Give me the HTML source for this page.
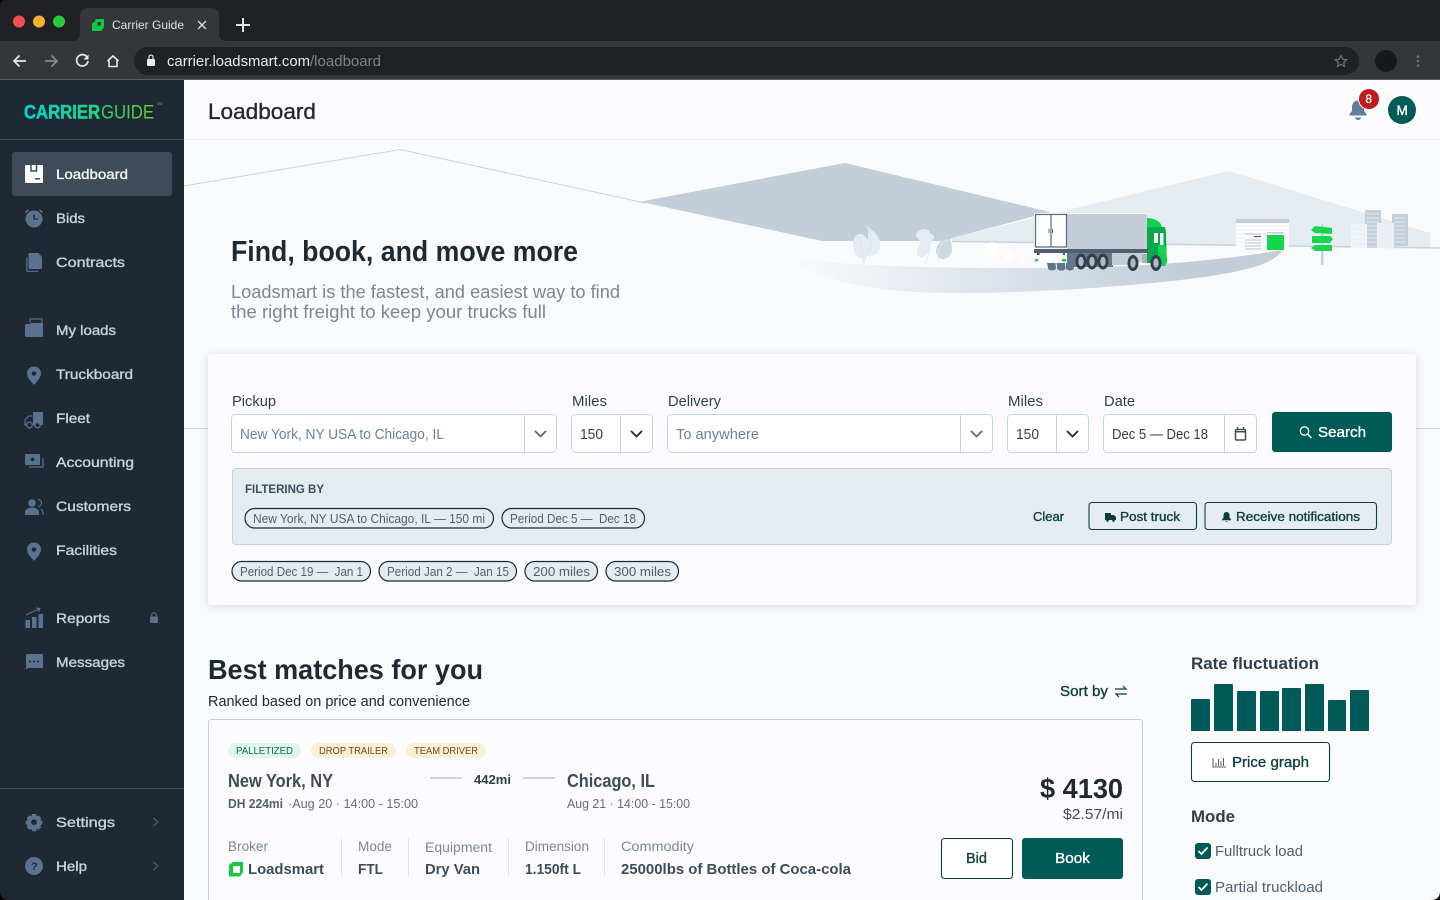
<!DOCTYPE html>
<html lang="en"><head><meta charset="utf-8"><title>Carrier Guide</title>
<style>
html,body{margin:0;padding:0;background:#f9fafc;overflow:hidden}
svg{display:block}
text{font-family:"Liberation Sans",sans-serif;white-space:pre}
.m{stroke-width:.35}
.b{font-weight:700}
</style></head><body>
<svg xmlns="http://www.w3.org/2000/svg" width="1440" height="900" viewBox="0 0 1440 900">
<defs>
<linearGradient id="lg" gradientUnits="userSpaceOnUse" x1="24" y1="0" x2="156" y2="0"><stop offset="0" stop-color="#08cfd6"/><stop offset=".55" stop-color="#1ed483"/><stop offset="1" stop-color="#6ccb24"/></linearGradient>
<linearGradient id="rd" gradientUnits="userSpaceOnUse" x1="790" y1="0" x2="1180" y2="0"><stop offset="0" stop-color="#f9fafc"/><stop offset="1" stop-color="#c3ced9"/></linearGradient>
<filter id="sh" x="-5%" y="-10%" width="110%" height="125%"><feDropShadow dx="0" dy="1" stdDeviation="4" flood-color="#52606d" flood-opacity=".22"/></filter>
</defs>

<!-- browser chrome -->
<rect width="1440" height="41" fill="#202124"/>
<rect y="41" width="1440" height="39" fill="#35363a"/>
<rect y="79" width="1440" height="1" fill="#5a5c60"/>
<path d="M72 41q8 0 8-8V16q0-8 8-8h123q8 0 8 8v17q0 8 8 8z" fill="#35363a"/>
<circle cx="19" cy="21.500" r="6" fill="#f0504f"/><circle cx="39" cy="21.500" r="6" fill="#f5b02e"/><circle cx="59" cy="21.500" r="6" fill="#2cc840"/>
<path d="M92 23.500l3.500-2.500v-2h8.500v8l-2.500 4H92z" fill="#12c93f"/><rect x="97.500" y="22" width="3.500" height="3.500" fill="#35363a"/>
<text x="112" y="29" font-size="12" fill="#dfe1e5" textLength="72" lengthAdjust="spacingAndGlyphs">Carrier Guide</text>
<path d="M198 21l8 8M206 21l-8 8" stroke="#dfe1e5" stroke-width="1.300"/>
<path d="M243 18v14M236 25h14" stroke="#dfe1e5" stroke-width="2"/>
<path d="M26 61H14M19.500 55.500L14 61l5.500 5.500" fill="none" stroke="#e8eaed" stroke-width="1.700"/>
<path d="M45 61h12M51.500 55.500L57 61l-5.500 5.500" fill="none" stroke="#85888c" stroke-width="1.700"/>
<path d="M87.300 57.500A5.700 5.700 0 1 0 88 61" fill="none" stroke="#e8eaed" stroke-width="1.700"/><path d="M88.500 54.500v5h-5z" fill="#e8eaed"/>
<path d="M107.500 61l5.500-5 5.500 5M109 60v6.500h8V60" fill="none" stroke="#e8eaed" stroke-width="1.600"/>
<rect x="134" y="47" width="1225" height="28" rx="14" fill="#202124"/>
<rect x="147" y="59" width="8" height="7" rx="1" fill="#e8eaed"/><path d="M149 59v-2a2 2 0 0 1 4 0v2" fill="none" stroke="#e8eaed" stroke-width="1.200"/>
<text x="167" y="66" font-size="14.500" fill="#e8eaed" textLength="143" lengthAdjust="spacingAndGlyphs">carrier.loadsmart.com</text>
<text x="310" y="66" font-size="14.500" fill="#7f8387" textLength="71" lengthAdjust="spacingAndGlyphs">/loadboard</text>
<path d="M1341 55.500l1.700 3.700 4 .5-3 2.700.8 4-3.500-2-3.500 2 .8-4-3-2.700 4-.5z" fill="none" stroke="#6f7276" stroke-width="1.200"/>
<circle cx="1386" cy="61" r="11" fill="#17181a"/>
<circle cx="1418" cy="56.500" r="1.300" fill="#6f7276"/><circle cx="1418" cy="61" r="1.300" fill="#6f7276"/><circle cx="1418" cy="65.500" r="1.300" fill="#6f7276"/>

<!-- main -->
<rect x="184" y="80" width="1256" height="820" fill="#f9fafc"/>
<rect x="184" y="80" width="1256" height="59" fill="#fcfcfe"/>
<rect x="184" y="139" width="1256" height="1" fill="#e8edf2"/>
<text x="208" y="119" font-size="22" fill="#1f2933" stroke="#1f2933" class="m" textLength="108" lengthAdjust="spacingAndGlyphs">Loadboard</text>
<path d="M1358 100.500c-4 0-6 3-6 6.500v4l-2.500 3v1.500h17V114l-2.500-3v-4c0-3.500-2-6.500-6-6.500z" fill="#627d98"/><path d="M1355 117.500a3 2.500 0 0 0 6 0z" fill="#627d98"/>
<circle cx="1369" cy="99" r="11" fill="#fcfcfe"/><circle cx="1369" cy="99" r="10" fill="#be1a1f"/>
<text x="1365.500" y="103" font-size="11.500" fill="#fff" stroke="#fff" class="m">8</text>
<circle cx="1402" cy="110" r="14" fill="#005a55"/>
<text x="1396.500" y="115" font-size="13.500" fill="#fff" stroke="#fff" class="m">M</text>

<!-- hero -->
<path d="M184 186L400 149.500 645 203" fill="none" stroke="#c8d4e0" stroke-width="1"/>
<path d="M952 238L1229 171 1430 233V247.500L952 241.500z" fill="#e4ebf1"/>
<path d="M640 201.700L845 163 1050 212 952 238 948 241H822z" fill="#c3ced9"/>
<path d="M952 241.500L1440 248" fill="none" stroke="#c8d3de" stroke-width="1.500"/>
<path d="M783 257C860 268 960 268 1040 268 1130 268 1210 262 1283 250 1270 268 1230 276 1130 285 1060 291 1000 293 960 293 880 293 830 285 783 257z" fill="url(#rd)"/>
<!-- trees -->
<path d="M868 226c5 6 13 8 12 22-2 6-7 8-12 8z" fill="#e4ebf1"/>
<path d="M860 234c-5 0-7 6-7 11 0 7 3 13 8 13 5 0 8-5 8-12 0-6-4-12-9-12z" fill="#e4ebf1"/>
<path d="M855 235c6 3 8 14 8 28M865 225c5 3 9 16 3 27-1 3-3 6-4 11" fill="none" stroke="#d9e1e8" stroke-width=".8"/>
<path d="M925 229c-4 0-9 2-9 6 0 3 3 4 4 6 1 3-3 6-3 11 0 4 3 6 6 5 5-2 7-8 8-13 1-3 3-5 3-8-1-2-4-1-4-3s-2-4-5-4z" fill="#e4ebf1"/>
<path d="M946 238c-4 1-10 8-10 13 0 5 3 8 7 8 5 0 9-5 9-10 0-5-2-12-6-11z" fill="#cdd7e0"/>
<path d="M926 238c5 6 4 16 -1 26M946 240c-6 4-9 10-8 23" fill="none" stroke="#e6ebf0" stroke-width=".8"/>
<circle cx="992" cy="249" r="7" fill="#fff" opacity=".85"/><circle cx="1010" cy="257" r="5" fill="#fff" opacity=".8"/><circle cx="1022" cy="261" r="2.500" fill="#fff" opacity=".8"/>
<!-- truck -->
<path d="M1047 263h8.500l.5 5a4 2.500 0 0 1-8 0zM1056.500 263h8.500l.5 5a4 2.500 0 0 1-8.500 0zM1066 263h8v5a4 2.500 0 0 1-8 0z" fill="#5e7488"/>
<rect x="1067" y="253" width="46" height="14" fill="#66798c"/>
<rect x="1112" y="253" width="16" height="12" fill="#c3ced9"/>
<rect x="1127" y="253" width="16" height="9" fill="#c3ced9"/>
<rect x="1142" y="254" width="9" height="9" fill="#a8b5c1"/>
<path d="M1147 218q9 .5 13 5l2 4h3l1 5 .5 21 .5 9-2 4h-6l-1-3h-11z" fill="#0aa84a"/>
<path d="M1147 218q9 .5 13 5l2 4-15 .5z" fill="#14d051"/>
<path d="M1158 245h7l1.500 8 .5 9-2 4h-7z" fill="#14d051"/>
<rect x="1154" y="233" width="4" height="10" fill="#eef2f5"/><rect x="1160" y="233" width="3.500" height="12" fill="#eef2f5"/>
<rect x="1034" y="213" width="113" height="37" fill="#fcfcfe"/>
<rect x="1067" y="214" width="80" height="36" rx="1" fill="#c3ced9"/>
<rect x="1035.500" y="214.500" width="31" height="32.500" fill="#fff" stroke="#52697f" stroke-width="1.200"/>
<path d="M1051 214.500v32.500" stroke="#52697f" stroke-width="1.200"/>
<path d="M1049 229v4M1052.500 229v4" stroke="#52697f" stroke-width="1"/>
<rect x="1034" y="249" width="114" height="4" fill="#52606d"/>
<rect x="1037" y="253" width="2.500" height="3" fill="#323f4b"/><rect x="1063" y="253" width="2" height="5" fill="#52606d"/>
<rect x="1034" y="255" width="33" height="7" fill="#fff"/>
<rect x="1035" y="259" width="3" height="2.500" fill="#14d051"/><rect x="1062" y="259" width="4" height="2.500" fill="#14d051"/>
<g fill="#323f4b">
<ellipse cx="1081" cy="261.500" rx="5.500" ry="8"/><ellipse cx="1092" cy="261.500" rx="5.500" ry="8"/><ellipse cx="1103" cy="261.500" rx="5.500" ry="8"/><ellipse cx="1133" cy="263" rx="5.500" ry="8"/><ellipse cx="1156" cy="263" rx="5.500" ry="8"/>
</g>
<g fill="#aeb9c4">
<ellipse cx="1081" cy="261.500" rx="2.700" ry="4.800"/><ellipse cx="1092" cy="261.500" rx="2.700" ry="4.800"/><ellipse cx="1103" cy="261.500" rx="2.700" ry="4.800"/><ellipse cx="1133" cy="263" rx="2.700" ry="4.800"/><ellipse cx="1156" cy="263" rx="2.700" ry="4.800"/>
</g>
<!-- warehouse -->
<rect x="1236" y="219" width="53" height="31" fill="#fcfcfe"/>
<path d="M1236 226h53M1236 230h53M1236 234h53M1236 238h9M1236 242h9M1236 246h9" stroke="#edf1f5"/>
<rect x="1236" y="219" width="53" height="4" fill="#c3ced9"/>
<rect x="1267" y="235" width="17" height="15" fill="#16d64e"/>
<rect x="1267" y="232" width="17" height="1.500" fill="#c3ced9"/>
<path d="M1245 234h16M1245 240h16M1245 243h16M1245 246h16M1245 249h16" stroke="#c3ced9" stroke-width="1.300"/><path d="M1254 236.500h7" stroke="#52697f" stroke-width="1.300"/>
<!-- sign -->
<rect x="1321" y="224" width="2.500" height="41" fill="#c8d3de"/>
<path d="M1315 226l17 2v6l-17-1-4-3z" fill="#16d64e"/>
<path d="M1312 236h18l3 3-3 4h-18z" fill="#16d64e"/>
<path d="M1315 245h17v6h-17l-4-3z" fill="#16d64e"/>
<!-- city -->
<rect x="1365" y="210" width="16" height="36" fill="#c3ced9"/><rect x="1392" y="214" width="16" height="32" fill="#c3ced9"/>
<path d="M1367 214h12M1367 218h12M1367 222h12M1367 226h12M1367 230h12M1367 234h12M1367 238h12M1367 242h12M1394 218h12M1394 222h12M1394 226h12M1394 230h12M1394 234h12M1394 238h12M1394 242h12" stroke="#d8e0e7" stroke-width="1.400"/>
<rect x="1351" y="224" width="16" height="24" fill="#f1f4f7"/><rect x="1377" y="223" width="17" height="25" fill="#ebeff3"/>
<path d="M1353 229h12M1353 234h12M1353 239h12M1353 244h12M1379 229h13M1379 234h13M1379 239h13M1379 244h13" stroke="#e4ebf1"/>
<text x="231" y="261" font-size="28.500" fill="#1f2933" class="b" textLength="347" lengthAdjust="spacingAndGlyphs">Find, book, and move more</text>
<text x="231" y="298" font-size="18" fill="#7b8794" textLength="389" lengthAdjust="spacingAndGlyphs">Loadsmart is the fastest, and easiest way to find</text>
<text x="231" y="318" font-size="18" fill="#7b8794" textLength="315" lengthAdjust="spacingAndGlyphs">the right freight to keep your trucks full</text>
<rect x="184" y="428" width="24" height="1" fill="#c8d6e3"/><rect x="1416" y="428" width="24" height="1" fill="#c8d6e3"/>

<!-- search card -->
<rect x="208" y="354" width="1208" height="251" rx="3" fill="#fcfcff" filter="url(#sh)"/>
<g font-size="15" fill="#323f4b">
<text x="232" y="406" textLength="44" lengthAdjust="spacingAndGlyphs">Pickup</text>
<text x="572" y="406" textLength="35" lengthAdjust="spacingAndGlyphs">Miles</text>
<text x="668" y="406" textLength="53" lengthAdjust="spacingAndGlyphs">Delivery</text>
<text x="1008" y="406" textLength="35" lengthAdjust="spacingAndGlyphs">Miles</text>
<text x="1104" y="406" textLength="31" lengthAdjust="spacingAndGlyphs">Date</text>
</g>
<g fill="#fff" stroke="#c3d3e0">
<rect x="231.500" y="414.500" width="325" height="38" rx="4"/>
<rect x="571.500" y="414.500" width="81" height="38" rx="4"/>
<rect x="667.500" y="414.500" width="325" height="38" rx="4"/>
<rect x="1007.500" y="414.500" width="81" height="38" rx="4"/>
<rect x="1103.500" y="414.500" width="153" height="38" rx="4"/>
</g>
<path d="M524.500 415v37M620.500 415v37M960.500 415v37M1056.500 415v37M1224.500 415v37" stroke="#c3d3e0"/>
<path d="M535 431l5.500 5.500 5.500-5.500M971 431l5.500 5.500 5.500-5.500" fill="none" stroke="#52606d" stroke-width="1.600"/>
<path d="M631 431l5.500 5.500 5.500-5.500M1067 431l5.500 5.500 5.500-5.500" fill="none" stroke="#1f2933" stroke-width="1.800"/>
<g font-size="14.500">
<text x="240" y="439" fill="#6b8299" textLength="204" lengthAdjust="spacingAndGlyphs">New York, NY USA to Chicago, IL</text>
<text x="580" y="439" fill="#323f4b" textLength="23" lengthAdjust="spacingAndGlyphs">150</text>
<text x="676" y="439" fill="#6b8299" textLength="83" lengthAdjust="spacingAndGlyphs">To anywhere</text>
<text x="1016" y="439" fill="#323f4b" textLength="23" lengthAdjust="spacingAndGlyphs">150</text>
<text x="1112" y="439" fill="#323f4b" textLength="96" lengthAdjust="spacingAndGlyphs">Dec 5 — Dec 18</text>
</g>
<rect x="1235.500" y="429.500" width="10" height="10.500" rx="1" fill="none" stroke="#3e4c59" stroke-width="1.500"/><path d="M1235.500 431h10v1.500h-10z" fill="#3e4c59"/><path d="M1237.500 427v3M1243.500 427v3" stroke="#3e4c59" stroke-width="1.400"/>
<rect x="1272" y="412" width="120" height="40" rx="3" fill="#005a57"/>
<circle cx="1304.500" cy="431" r="4.200" fill="none" stroke="#fff" stroke-width="1.300"/><path d="M1307.500 434l4 4" stroke="#fff" stroke-width="1.300"/>
<text x="1318" y="437" font-size="14.500" fill="#fff" stroke="#fff" class="m" textLength="48" lengthAdjust="spacingAndGlyphs">Search</text>

<!-- filter box -->
<rect x="232.500" y="468.500" width="1159" height="76" rx="3" fill="#e4ebf1" stroke="#c3d3e0"/>
<text x="245" y="493" font-size="12" fill="#3e4c59" class="b" textLength="79" lengthAdjust="spacingAndGlyphs">FILTERING BY</text>
<g fill="none" stroke="#1f2933" stroke-width="1.200">
<rect x="245" y="508.500" width="248.500" height="19.500" rx="9.700"/>
<rect x="502" y="508.500" width="142.500" height="19.500" rx="9.700"/>
<rect x="232" y="561.500" width="138.500" height="19.500" rx="9.700" fill="#e4ebf1"/>
<rect x="379" y="561.500" width="137.500" height="19.500" rx="9.700" fill="#e4ebf1"/>
<rect x="525" y="561.500" width="72.500" height="19.500" rx="9.700" fill="#e4ebf1"/>
<rect x="606" y="561.500" width="72.500" height="19.500" rx="9.700" fill="#e4ebf1"/>
</g>
<g font-size="12.500" fill="#52606d">
<text x="253" y="523" textLength="232" lengthAdjust="spacingAndGlyphs">New York, NY USA to Chicago, IL — 150 mi</text>
<text x="510" y="523" textLength="126" lengthAdjust="spacingAndGlyphs">Period Dec 5 —  Dec 18</text>
<text x="240" y="576" textLength="123" lengthAdjust="spacingAndGlyphs">Period Dec 19 —  Jan 1</text>
<text x="387" y="576" textLength="122" lengthAdjust="spacingAndGlyphs">Period Jan 2 —  Jan 15</text>
<text x="533" y="576" textLength="57" lengthAdjust="spacingAndGlyphs">200 miles</text>
<text x="614" y="576" textLength="57" lengthAdjust="spacingAndGlyphs">300 miles</text>
</g>
<g font-size="12.500" fill="#0f3d3e" stroke="#0f3d3e" class="m">
<text x="1033" y="521" textLength="31" lengthAdjust="spacingAndGlyphs">Clear</text>
<text x="1120" y="521" textLength="60" lengthAdjust="spacingAndGlyphs">Post truck</text>
<text x="1236" y="521" textLength="124" lengthAdjust="spacingAndGlyphs">Receive notifications</text>
</g>
<rect x="1089" y="502.500" width="107.500" height="27" rx="3" fill="none" stroke="#0f3d3e" stroke-width="1.100"/>
<rect x="1205" y="502.500" width="171.500" height="27" rx="3" fill="none" stroke="#0f3d3e" stroke-width="1.100"/>
<path d="M1105 513h6v7h-6zM1111 515h3l2 2v3h-5z" fill="#0f3d3e"/><circle cx="1107.500" cy="520.500" r="1.300" fill="#0f3d3e"/><circle cx="1113.500" cy="520.500" r="1.300" fill="#0f3d3e"/>
<path d="M1226.500 512c-2 0-3 1.500-3 3.500v2l-1.500 2v.7h9v-.7l-1.500-2v-2c0-2-1-3.500-3-3.500zM1225.500 521h2l-1 1.300z" fill="#0f3d3e"/>

<!-- list -->
<text x="208" y="679" font-size="28" fill="#1f2933" class="b" textLength="275" lengthAdjust="spacingAndGlyphs">Best matches for you</text>
<text x="208" y="706" font-size="15" fill="#1f2933" textLength="262" lengthAdjust="spacingAndGlyphs">Ranked based on price and convenience</text>
<text x="1060" y="696" font-size="14.500" fill="#0f3d3e" stroke="#0f3d3e" class="m" textLength="48" lengthAdjust="spacingAndGlyphs">Sort by</text>
<path d="M1115 689h11l-3-3M1127 694h-11l3 3" fill="none" stroke="#0f3d3e" stroke-width="1.200"/>
<rect x="208.500" y="719.500" width="934" height="200" rx="3" fill="#fcfcff" stroke="#c3d0dc"/>
<rect x="228" y="743" width="73" height="15" rx="7.500" fill="#e1f5ec"/>
<rect x="311" y="743" width="85" height="15" rx="7.500" fill="#fcf0d4"/>
<rect x="406" y="743" width="80" height="15" rx="7.500" fill="#fcf0d4"/>
<g font-size="10">
<text x="236" y="754" fill="#0d6e4f" textLength="57" lengthAdjust="spacingAndGlyphs">PALLETIZED</text>
<text x="319" y="754" fill="#74481a" textLength="69" lengthAdjust="spacingAndGlyphs">DROP TRAILER</text>
<text x="414" y="754" fill="#74481a" textLength="64" lengthAdjust="spacingAndGlyphs">TEAM DRIVER</text>
</g>
<text x="228" y="787" font-size="18" fill="#3e4c59" class="b" textLength="105" lengthAdjust="spacingAndGlyphs">New York, NY</text>
<text x="567" y="787" font-size="18" fill="#3e4c59" class="b" textLength="88" lengthAdjust="spacingAndGlyphs">Chicago, IL</text>
<path d="M430 778h32M523 778h32" stroke="#cbd5df" stroke-width="2"/>
<text x="474" y="784" font-size="13" fill="#323f4b" class="b" textLength="37" lengthAdjust="spacingAndGlyphs">442mi</text>
<text x="228" y="808" font-size="13" fill="#52606d" class="b" textLength="55" lengthAdjust="spacingAndGlyphs">DH 224mi</text>
<text x="288" y="808" font-size="13" fill="#616e7c" textLength="130" lengthAdjust="spacingAndGlyphs">·Aug 20 · 14:00 - 15:00</text>
<text x="567" y="808" font-size="13" fill="#616e7c" textLength="123" lengthAdjust="spacingAndGlyphs">Aug 21 · 14:00 - 15:00</text>
<path d="M341.500 838v38M408.500 838v38M508.500 838v38M604.500 838v38" stroke="#dfe5ea"/>
<g font-size="13.500" fill="#7b8794">
<text x="228" y="851" textLength="40" lengthAdjust="spacingAndGlyphs">Broker</text>
<text x="358" y="851" textLength="34" lengthAdjust="spacingAndGlyphs">Mode</text>
<text x="425" y="852" textLength="67" lengthAdjust="spacingAndGlyphs">Equipment</text>
<text x="525" y="851" textLength="64" lengthAdjust="spacingAndGlyphs">Dimension</text>
<text x="621" y="851" textLength="73" lengthAdjust="spacingAndGlyphs">Commodity</text>
</g>
<path d="M229 865l4-3h10v10l-3 4.500h-11z" fill="#12c93f"/><rect x="233" y="866" width="7" height="7" fill="#fcfcff"/>
<g font-size="15" fill="#3e4c59" class="b">
<text x="248" y="874" textLength="76" lengthAdjust="spacingAndGlyphs">Loadsmart</text>
<text x="358" y="874" textLength="25" lengthAdjust="spacingAndGlyphs">FTL</text>
<text x="425" y="874" textLength="55" lengthAdjust="spacingAndGlyphs">Dry Van</text>
<text x="525" y="874" textLength="56" lengthAdjust="spacingAndGlyphs">1.150ft L</text>
<text x="621" y="874" textLength="230" lengthAdjust="spacingAndGlyphs">25000lbs of Bottles of Coca-cola</text>
</g>
<text x="1040" y="798" font-size="28" fill="#1f2933" class="b" textLength="83" lengthAdjust="spacingAndGlyphs">$ 4130</text>
<text x="1063" y="819" font-size="15" fill="#3e4c59" textLength="60" lengthAdjust="spacingAndGlyphs">$2.57/mi</text>
<rect x="941.500" y="838.500" width="71" height="40" rx="3" fill="#fff" stroke="#0f3d3e" stroke-width="1.100"/>
<text x="966" y="863" font-size="14.500" fill="#0f3d3e" stroke="#0f3d3e" class="m" textLength="21" lengthAdjust="spacingAndGlyphs">Bid</text>
<rect x="1022" y="838" width="101" height="41" rx="3" fill="#005a57"/>
<text x="1055" y="863" font-size="14.500" fill="#fff" stroke="#fff" class="m" textLength="35" lengthAdjust="spacingAndGlyphs">Book</text>

<!-- right column -->
<text x="1191" y="669" font-size="17" fill="#323f4b" class="b" textLength="128" lengthAdjust="spacingAndGlyphs">Rate fluctuation</text>
<g fill="#005a57">
<path d="M1191 731v-31q0-1 1-1h17q1 0 1 1v31z"/>
<path d="M1214 731v-46q0-1 1-1h17q1 0 1 1v46z"/>
<path d="M1237 731v-39q0-1 1-1h17q1 0 1 1v39z"/>
<path d="M1260 731v-39q0-1 1-1h17q1 0 1 1v39z"/>
<path d="M1282 731v-42q0-1 1-1h17q1 0 1 1v42z"/>
<path d="M1305 731v-46q0-1 1-1h17q1 0 1 1v46z"/>
<path d="M1328 731v-30q0-1 1-1h16q1 0 1 1v30z"/>
<path d="M1350 731v-40q0-1 1-1h17q1 0 1 1v40z"/>
</g>
<rect x="1191.500" y="742.500" width="138" height="39" rx="3" fill="#fff" stroke="#0f3d3e" stroke-width="1.100"/>
<path d="M1213 758v9h13M1216 763v3M1218.500 759v7M1221 761v5M1223.500 758v8" fill="none" stroke="#52606d"/>
<text x="1232" y="767" font-size="15" fill="#0f3d3e" stroke="#0f3d3e" class="m" textLength="77" lengthAdjust="spacingAndGlyphs">Price graph</text>
<text x="1191" y="822" font-size="17" fill="#323f4b" class="b" textLength="44" lengthAdjust="spacingAndGlyphs">Mode</text>
<rect x="1195" y="843" width="16" height="16" rx="3" fill="#005a57"/><path d="M1198.500 851l3 3 6-6.500" fill="none" stroke="#fff" stroke-width="1.800"/>
<text x="1215" y="856" font-size="14.500" fill="#52606d" textLength="88" lengthAdjust="spacingAndGlyphs">Fulltruck load</text>
<rect x="1195" y="879" width="16" height="16" rx="3" fill="#005a57"/><path d="M1198.500 887l3 3 6-6.500" fill="none" stroke="#fff" stroke-width="1.800"/>
<text x="1215" y="892" font-size="14.500" fill="#52606d" textLength="108" lengthAdjust="spacingAndGlyphs">Partial truckload</text>

<!-- sidebar -->
<rect y="80" width="184" height="820" fill="#1f2933"/>
<rect y="139" width="184" height="1" fill="#3e4c59"/>
<rect y="788" width="184" height="1" fill="#3e4c59"/>
<text x="24" y="118.500" font-size="19" fill="url(#lg)" stroke="url(#lg)" stroke-width=".5" class="b" textLength="76" lengthAdjust="spacingAndGlyphs">CARRIER</text>
<text x="101" y="118.500" font-size="19" fill="url(#lg)" textLength="53" lengthAdjust="spacingAndGlyphs">GUIDE</text>
<text x="156" y="105" font-size="4" fill="#8a9aa8">TM</text>
<rect x="12" y="152" width="160" height="44" rx="3" fill="#3e4c59"/>
<rect x="25" y="165" width="18" height="18" rx="1" fill="#fff"/><path d="M31 165v6h5.500v-6" fill="none" stroke="#3e4c59" stroke-width="1.500"/><rect x="35" y="178" width="5" height="1.500" fill="#3e4c59"/>
<text x="56" y="179" font-size="14" fill="#f5f7fa" stroke="#f5f7fa" class="m" textLength="72" lengthAdjust="spacingAndGlyphs">Loadboard</text>
<g font-size="14" fill="#cbd2d9" stroke="#cbd2d9" class="m">
<text x="56" y="223" textLength="29" lengthAdjust="spacingAndGlyphs">Bids</text>
<text x="56" y="267" textLength="69" lengthAdjust="spacingAndGlyphs">Contracts</text>
<text x="56" y="335" textLength="60" lengthAdjust="spacingAndGlyphs">My loads</text>
<text x="56" y="379" textLength="77" lengthAdjust="spacingAndGlyphs">Truckboard</text>
<text x="56" y="423" textLength="34" lengthAdjust="spacingAndGlyphs">Fleet</text>
<text x="56" y="467" textLength="78" lengthAdjust="spacingAndGlyphs">Accounting</text>
<text x="56" y="511" textLength="75" lengthAdjust="spacingAndGlyphs">Customers</text>
<text x="56" y="555" textLength="61" lengthAdjust="spacingAndGlyphs">Facilities</text>
<text x="56" y="623" textLength="54" lengthAdjust="spacingAndGlyphs">Reports</text>
<text x="56" y="667" textLength="69" lengthAdjust="spacingAndGlyphs">Messages</text>
<text x="56" y="827" textLength="59" lengthAdjust="spacingAndGlyphs">Settings</text>
<text x="56" y="871" textLength="31" lengthAdjust="spacingAndGlyphs">Help</text>
</g>
<g fill="#587290">
<!-- bids -->
<circle cx="34" cy="219" r="8.500"/><path d="M34 214.500v4.500h4" fill="none" stroke="#1f2933" stroke-width="1.300"/><path d="M25.500 212.500l3-2.500M42.500 212.500l-3-2.500" stroke="#587290" stroke-width="1.500"/>
<!-- contracts -->
<path d="M29.500 253h9l3.500 4v11q0 1-1 1H29.500q-1 0-1-1v-14q0-1 1-1z"/><path d="M26.800 257.500v13q0 .8.800.8h11" fill="none" stroke="#587290" stroke-width="1.200"/>
<!-- my loads -->
<path d="M25 325q0-1 1-1h4l1-1h11q1 0 1 1v12q0 1-1 1H26q-1 0-1-1z"/><path d="M30 322.500v-3.500h12v6" fill="none" stroke="#587290" stroke-width="1.200"/><path d="M35 321.500h6" stroke="#1f2933"/>
<!-- pins -->
<path d="M34 366.500c-4 0-7 3-7 7 0 4 4 8 7 11.500 3-3.500 7-7.500 7-11.500 0-4-3-7-7-7z"/><circle cx="34" cy="373.500" r="2.300" fill="#1f2933"/><path d="M34 542.500c-4 0-7 3-7 7 0 4 4 8 7 11.500 3-3.500 7-7.500 7-11.500 0-4-3-7-7-7z"/><circle cx="34" cy="549.500" r="2.300" fill="#1f2933"/>
<!-- fleet -->
<path d="M33 412h10v13h-3a3.500 3.500 0 0 0-6 0h-1z"/><path d="M32 416h-3l-4 4v5h2" fill="none" stroke="#587290" stroke-width="1.200"/><circle cx="29.500" cy="425" r="2.800" fill="none" stroke="#587290" stroke-width="1.300"/><circle cx="37.500" cy="425" r="2.800" fill="none" stroke="#587290" stroke-width="1.300"/>
<!-- accounting -->
<rect x="25" y="454" width="15" height="11" rx="1"/><circle cx="32.500" cy="459.500" r="1.800" fill="#1f2933"/><path d="M43 458v9H29" fill="none" stroke="#587290" stroke-width="1.200"/>
<!-- customers -->
<circle cx="32" cy="503" r="3.800"/><path d="M25 515v-2.500c0-3 3-5 7-5s7 2 7 5v2.500z"/><path d="M38 499.500a3.500 3.500 0 0 1 0 7M41 509c1.500 1 2.300 3 2.300 6" fill="none" stroke="#587290" stroke-width="1.100"/>
<!-- reports -->
<rect x="25.500" y="620" width="4.500" height="8"/><rect x="32" y="617" width="4.500" height="11"/><rect x="38.500" y="614" width="4.500" height="14"/><path d="M26 615l14-6.500M36 608l4 .5-1.500 3.500" fill="none" stroke="#587290" stroke-width="1"/>
<!-- messages -->
<path d="M27 654h15q1 0 1 1v12q0 1-1 1H29l-4 1.500 1-2V655q0-1 1-1z"/><circle cx="30" cy="661.500" r="1" fill="#1f2933"/><circle cx="34" cy="661.500" r="1" fill="#1f2933"/><circle cx="38" cy="661.500" r="1" fill="#1f2933"/>
<!-- settings -->
<path d="M32 814h4l.6 2.200 2-.8 2.700 2.700-1 2 2 .8v3.400l-2 .8 1 2-2.700 2.700-2-.8-.6 2.200h-4l-.6-2.200-2 .8-2.700-2.700 1-2-2-.8v-3.400l2-.8-1-2 2.700-2.700 2 .8z"/><circle cx="34" cy="822.200" r="2.800" fill="#1f2933"/>
<!-- help -->
<circle cx="34" cy="866" r="9"/>
<!-- lock -->
<rect x="150" y="616.500" width="8" height="6.500" rx="1"/><path d="M151.800 616.500v-1.500a2.200 2.200 0 0 1 4.400 0v1.500" fill="none" stroke="#587290" stroke-width="1.100"/>
</g>
<text x="31" y="870" font-size="11" fill="#1f2933" class="b">?</text>
<path d="M153.500 818l4 4-4 4M153.500 862l4 4-4 4" fill="none" stroke="#52606d" stroke-width="1.200"/>

<!-- window corners -->
<path d="M0 0h6Q0 0 0 6zM0 900v-9q0 9 9 9z" fill="#000"/>
<path d="M1431 900q9 0 9-9v9z" fill="#000"/>
</svg>
</body></html>
